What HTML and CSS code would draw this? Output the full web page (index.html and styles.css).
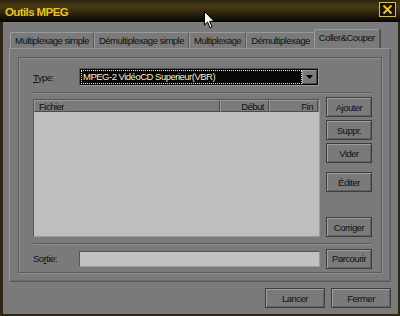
FILE: index.html
```html
<!DOCTYPE html>
<html lang="fr">
<head>
<meta charset="utf-8">
<title>Outils MPEG</title>
<link rel="stylesheet" href="styles.css">
</head>
<body>
<div class="window">
  <div class="titlebar">
    <span class="title">Outils MPEG</span>
    <span class="close">
      <svg width="11" height="9" viewBox="0 0 11 9"><path d="M1.5 0.5 L9.5 8.5 M9.5 0.5 L1.5 8.5" stroke="#f0c418" stroke-width="2" fill="none"/></svg>
    </span>
  </div>
  <div class="content">
    <div class="tabs">
      <div class="tab">Multiplexage simple</div>
      <div class="tab">Démultiplexage simple</div>
      <div class="tab">Multiplexage</div>
      <div class="tab">Démultiplexage</div>
      <div class="tab active">Coller&amp;Couper</div>
    </div>
    <div class="panel">
      <div class="group">
        <div class="row">
          <span class="lbl"><u>T</u>ype:</span>
          <div class="combo">
            <span class="combo-text">MPEG-2 VidéoCD Superieur(VBR)</span>
            <span class="combo-btn"><svg width="7" height="4" viewBox="0 0 7 4"><path d="M0 0 H7 L3.5 4 Z" fill="#000"/></svg></span>
          </div>
        </div>
        <div class="sep sep-top"></div>
        <div class="main">
          <div class="list">
            <div class="list-head">
              <div class="col c1">Fichier</div>
              <div class="col c2">Début</div>
              <div class="col c3">Fin</div>
            </div>
            <div class="list-body"></div>
          </div>
          <div class="side">
            <button class="btn">Ajouter</button>
            <button class="btn">Suppr.</button>
            <button class="btn">Vider</button>
            <button class="btn btn-edit">Éditer</button>
            <button class="btn btn-last">Corriger</button>
          </div>
        </div>
        <div class="sep sep-bottom"></div>
        <div class="row row-out">
          <span class="lbl">So<u>r</u>tie:</span>
          <div class="input"></div>
          <button class="btn">Parcourir</button>
        </div>
      </div>
    </div>
    <div class="footer">
      <button class="btn btn-wide">Lancer</button>
      <button class="btn btn-wide">Fermer</button>
    </div>
  </div>
  <svg class="cursor" width="12" height="18" viewBox="0 0 12 18">
    <path d="M0.5 0.5 L0.5 14 L3.6 11 L6 16.8 L8 16 L5.7 10.3 L10 10.3 Z" fill="#fff" stroke="#000" stroke-width="1"/>
  </svg>
</div>
</body>
</html>
```

FILE: styles.css
```css
* { box-sizing: border-box; }

html, body {
  margin: 0;
  padding: 0;
  background: #7a7a7a;
}

body {
  font-family: "Liberation Sans", Arial, sans-serif;
  font-size: 9.5px;
  letter-spacing: -0.5px;
  color: #111;
}

.window {
  position: relative;
  width: 400px;
  height: 316px;
  display: flex;
  flex-direction: column;
  background: #2e2616;
  overflow: hidden;
}

.titlebar {
  height: 22px;
  flex: none;
  display: flex;
  align-items: center;
  padding-left: 5px;
  background: linear-gradient(to bottom, #2e2410 0%, #4a3b15 30%, #2a210c 65%, #050402 100%);
}

.title {
  color: #ecc414;
  font-weight: bold;
  font-size: 11.5px;
  letter-spacing: -0.6px;
  line-height: 12px;
  margin-top: 1px;
}

.close {
  margin-left: auto;
  margin-right: 4px;
  width: 17px;
  height: 15px;
  margin-top: -3px;
  border: 1px solid #e8bc14;
  display: flex;
  align-items: center;
  justify-content: center;
  background: #1a1408;
}

.content {
  flex: 1;
  display: flex;
  flex-direction: column;
  background: #7a7a7a;
  border-left: 3px solid #2e2616;
  border-right: 2px solid #2e2616;
  border-bottom: 2px solid #2e2616;
  padding: 7px 7px 6px 6px;
}

/* tabs */
.tabs {
  display: flex;
  align-items: flex-end;
  height: 19px;
  padding-left: 1px;
}

.tab {
  height: 16px;
  padding: 1px 4px 0;
  line-height: 14px;
  white-space: nowrap;
  border: 1px solid #5a5a5a;
  border-top-color: #9a9a9a;
  border-left-color: #9a9a9a;
  border-bottom: none;
  border-radius: 2px 2px 0 0;
  background: #7a7a7a;
}

.tab.active {
  height: 19px;
  line-height: 16px;
  padding: 0 4px;
  margin-left: -1px;
  margin-right: -2px;
  position: relative;
  z-index: 1;
  box-shadow: 1px 0 0 #4a4a4a;
}

/* panel */
.panel {
  border: 1px solid #5a5a5a;
  border-top-color: #959595;
  border-left-color: #959595;
  box-shadow: inset -1px -1px 0 #6a6a6a;
  padding: 8px;
}

.group {
  border: 1px solid #5c5c5c;
  box-shadow: inset 1px 1px 0 #8e8e8e, 1px 1px 0 #8e8e8e;
  padding: 10px 9px 4px 14px;
}

.row {
  display: flex;
  align-items: center;
  height: 18px;
}

.row-out {
  height: 19px;
}

.lbl {
  width: 46px;
  flex: none;
}

.combo {
  width: 240px;
  height: 18px;
  display: flex;
  border: 1px solid #555;
  border-right-color: #9a9a9a;
  border-bottom-color: #9a9a9a;
  background: #060606;
  padding: 1px;
}

.combo-text {
  flex: 1;
  color: #f2efc6;
  border: 1px dotted #e8e8e8;
  line-height: 12px;
  padding-left: 1px;
  white-space: nowrap;
  overflow: hidden;
}

.combo-btn {
  width: 15px;
  flex: none;
  background: #7a7a7a;
  border: 1px solid #4a4a4a;
  border-top-color: #9c9c9c;
  border-left-color: #9c9c9c;
  display: flex;
  align-items: center;
  justify-content: center;
}

.sep {
  height: 2px;
  border-top: 1px solid #5c5c5c;
  border-bottom: 1px solid #8e8e8e;
}

.sep-top { margin: 6px 0 3px; }
.sep-bottom { margin: 6px 0 4px; }

.main {
  display: flex;
  gap: 6px;
  height: 140px;
}

.list {
  width: 288px;
  margin-top: 2px;
  display: flex;
  flex-direction: column;
  border: 1px solid #555;
  border-right-color: #999;
  border-bottom-color: #999;
}

.list-head {
  display: flex;
  height: 12px;
  line-height: 11px;
  flex: none;
}

.col {
  background: #7a7a7a;
  border: 1px solid #4c4c4c;
  border-top-color: #9a9a9a;
  border-left-color: #9a9a9a;
  padding: 0 4px;
}

.c1 { width: 186px; }
.c2 { width: 49px; text-align: right; }
.c3 { width: 49px; text-align: right; }

.list-body {
  flex: 1;
  background: #bebebe;
}

.side {
  width: 46px;
  display: flex;
  flex-direction: column;
  gap: 3px;
}

.btn {
  font: inherit;
  letter-spacing: inherit;
  color: #111;
  width: 46px;
  height: 20px;
  padding: 0;
  background: #7a7a7a;
  border: 1px solid #3e3e3e;
  box-shadow: inset 1px 1px 0 #9e9e9e, inset -1px -1px 0 #606060;
  white-space: nowrap;
}

.btn-edit { margin-top: 6px; }
.btn-last { margin-top: auto; }

.input {
  width: 242px;
  height: 16px;
  margin-right: 6px;
  background: #c2c2c2;
  border: 1px solid #555;
  border-right-color: #9a9a9a;
  border-bottom-color: #9a9a9a;
}

.footer {
  display: flex;
  justify-content: flex-end;
  gap: 6px;
  margin-top: 6px;
}

.btn-wide {
  width: 60px;
}

.cursor {
  position: absolute;
  left: 204px;
  top: 11px;
}
```
